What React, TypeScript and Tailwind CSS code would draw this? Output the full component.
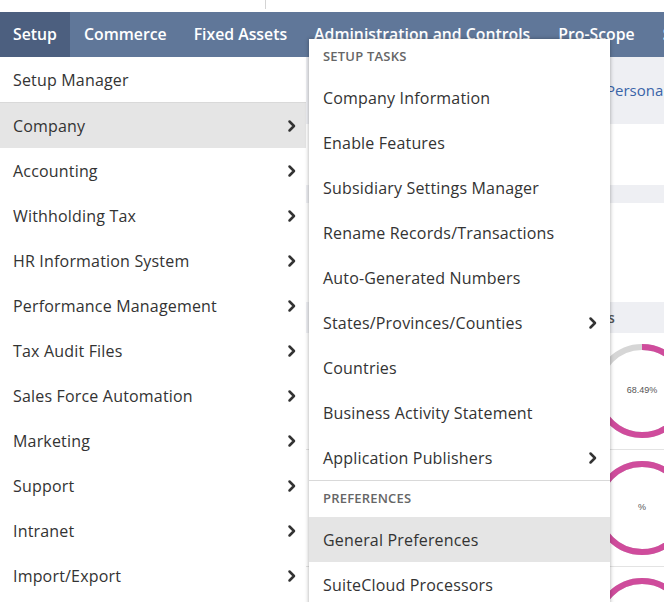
import React from "react";

const font = { fontFamily: '"Open Sans", "Noto Sans", sans-serif' };

const Chevron = () => (
  <svg width="10" height="14" viewBox="0 0 10 14" className="shrink-0">
    <polyline points="2.5,2.5 7,7 2.5,11.5" fill="none" stroke="#333" strokeWidth="2.5" strokeLinecap="round" strokeLinejoin="round" />
  </svg>
);

const leftItems: { label: string; arrow: boolean; active?: boolean }[] = [
  { label: "Company", arrow: true, active: true },
  { label: "Accounting", arrow: true },
  { label: "Withholding Tax", arrow: true },
  { label: "HR Information System", arrow: true },
  { label: "Performance Management", arrow: true },
  { label: "Tax Audit Files", arrow: true },
  { label: "Sales Force Automation", arrow: true },
  { label: "Marketing", arrow: true },
  { label: "Support", arrow: true },
  { label: "Intranet", arrow: true },
  { label: "Import/Export", arrow: true },
];

const setupTasks: { label: string; arrow?: boolean }[] = [
  { label: "Company Information" },
  { label: "Enable Features" },
  { label: "Subsidiary Settings Manager" },
  { label: "Rename Records/Transactions" },
  { label: "Auto-Generated Numbers" },
  { label: "States/Provinces/Counties", arrow: true },
  { label: "Countries" },
  { label: "Business Activity Statement" },
  { label: "Application Publishers", arrow: true },
];

const Donut = ({ pct, label }: { pct: number; label: string }) => {
  const r = 44;
  const c = 2 * Math.PI * r;
  return (
    <div className="relative w-[96px] h-[96px]">
      <svg width="96" height="96" viewBox="0 0 96 96">
        <circle cx="48" cy="48" r={r} fill="none" stroke="#d6d6d6" strokeWidth="6" />
        <circle
          cx="48"
          cy="48"
          r={r}
          fill="none"
          stroke="#cf4c9c"
          strokeWidth="6"
          strokeDasharray={`${(pct / 100) * c} ${c}`}
          transform="rotate(-90 48 48)"
        />
      </svg>
      <div className="absolute inset-0 flex items-center justify-center text-[9px] text-[#555]" style={{ fontFamily: '"Liberation Sans", sans-serif' }}>
        {label}
      </div>
    </div>
  );
};

export default function App() {
  return (
    <div className="relative w-[664px] h-[602px] overflow-hidden bg-white" style={font}>
      {/* top strip */}
      <div className="h-[12px] flex">
        <div className="w-[265px]" />
        <div className="w-px h-[9px] bg-[#d4d4d4]" />
      </div>
      {/* nav bar */}
      <div className="h-[45px] bg-[#607799] flex items-stretch text-white text-[15.8px] font-semibold whitespace-nowrap">
        <div className="w-[70px] shrink-0 bg-[#4c5f7f] flex items-center pl-[13px]">Setup</div>
        <div className="shrink-0 flex items-center pl-[14px]">Commerce</div>
        <div className="shrink-0 flex items-center pl-[27px]">Fixed Assets</div>
        <div className="shrink-0 flex items-center pl-[27px]">Administration and Controls</div>
        <div className="shrink-0 flex items-center pl-[28px]">Pro-Scope</div>
        <div className="shrink-0 flex items-center pl-[28px]">Setup</div>
      </div>
      {/* body */}
      <div className="flex">
        {/* left menu */}
        <div className="w-[306px] shrink-0 bg-white text-[16px] tracking-[0.18px] text-[#333]">
          <div className="h-[46px] flex items-center pl-[13px] border-b border-[#d9d9d9]">Setup Manager</div>
          {leftItems.map((it) => (
            <div
              key={it.label}
              className={`h-[45px] flex items-center justify-between pl-[13px] pr-[9px] ${it.active ? "bg-[#e5e5e5]" : ""}`}
            >
              <span>{it.label}</span>
              {it.arrow && <Chevron />}
            </div>
          ))}
        </div>
        {/* background content */}
        <div className="w-[358px] shrink-0 flex flex-col">
          <div className="h-[67px] bg-[#eeeff3] flex items-center pl-[300px] text-[15px] text-[#3a64a8] whitespace-nowrap overflow-hidden">
            Personalize
          </div>
          <div className="h-[61px] bg-white" />
          <div className="h-[18px] bg-[#eeeff3]" />
          <div className="h-[99px] bg-white" />
          <div className="h-[31px] bg-[#eeeff3] flex items-center pl-[250px] text-[14px] font-semibold text-[#555] whitespace-nowrap">
            Progress
          </div>
          {[
            { pct: 68.49, label: "68.49%" },
            { pct: 100, label: "%" },
            { pct: 100, label: "" },
          ].map((d, i) => (
            <div key={i} className="h-[117px] shrink-0 border-b border-[#e3e3e3] flex items-center pl-[288px]">
              <Donut pct={d.pct} label={d.label} />
            </div>
          ))}
        </div>
      </div>
      {/* submenu */}
      <div className="absolute left-[309px] top-[39px] w-[301px] bg-white shadow-[0_0_4px_rgba(0,0,0,0.35)] text-[16px] tracking-[0.18px] text-[#333]">
        <div className="h-[36px] flex items-center pl-[14px] text-[13px] font-semibold text-[#666] tracking-[0.2px]">SETUP TASKS</div>
        {setupTasks.map((it) => (
          <div key={it.label} className="h-[45px] flex items-center justify-between pl-[14px] pr-[12px]">
            <span>{it.label}</span>
            {it.arrow && <Chevron />}
          </div>
        ))}
        <div className="h-[37px] border-t border-[#d9d9d9] flex items-center pl-[14px] text-[13px] font-semibold text-[#666] tracking-[0.2px]">PREFERENCES</div>
        <div className="h-[45px] flex items-center pl-[14px] bg-[#e5e5e5]">General Preferences</div>
        <div className="h-[45px] flex items-center pl-[14px]">SuiteCloud Processors</div>
      </div>
    </div>
  );
}
